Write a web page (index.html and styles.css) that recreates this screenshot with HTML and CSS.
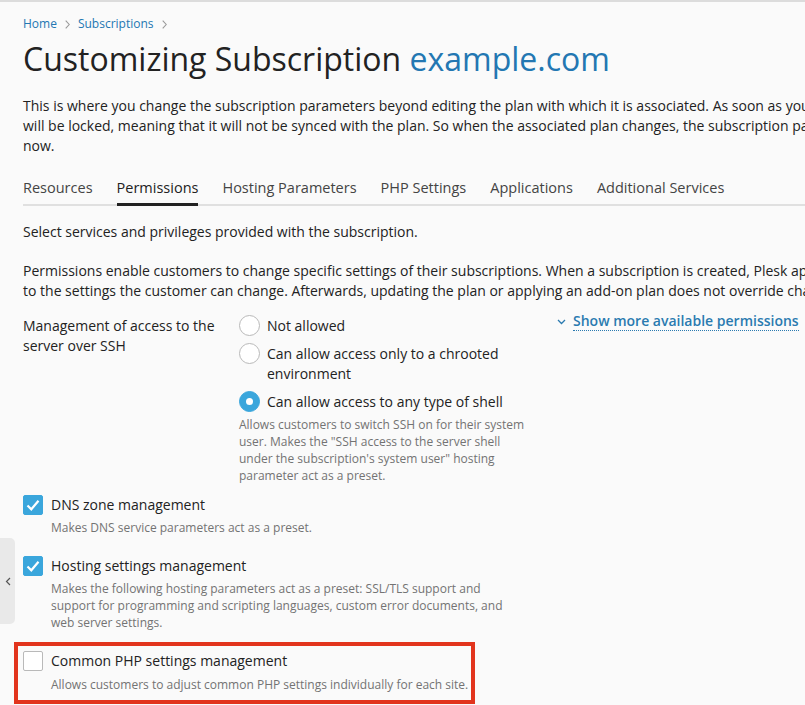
FILE: index.html
```html
<!DOCTYPE html>
<html lang="en">
<head>
<meta charset="utf-8">
<title>Customizing Subscription example.com</title>
<link rel="stylesheet" href="styles.css">
</head>
<body>
<div class="page">
  <nav class="breadcrumbs">
    <a href="#">Home</a><svg class="sep" width="5" height="9" viewBox="0 0 5 9"><path d="M0.7 0.7L4.2 4.5 0.7 8.3" fill="none" stroke="#999" stroke-width="1.1"/></svg><a href="#">Subscriptions</a><svg class="sep" width="5" height="9" viewBox="0 0 5 9"><path d="M0.7 0.7L4.2 4.5 0.7 8.3" fill="none" stroke="#999" stroke-width="1.1"/></svg>
  </nav>
  <h1 class="title">Customizing Subscription <span class="domain">example.com</span></h1>
  <p class="intro">This is where you change the subscription parameters beyond editing the plan with which it is associated. As soon as you save the changes, the subscription<br>will be locked, meaning that it will not be synced with the plan. So when the associated plan changes, the subscription parameters will stay as they are<br>now.</p>

  <ul class="tabs">
    <li class="tab">Resources</li>
    <li class="tab active">Permissions</li>
    <li class="tab">Hosting Parameters</li>
    <li class="tab">PHP Settings</li>
    <li class="tab">Applications</li>
    <li class="tab">Additional Services</li>
  </ul>

  <p class="hint">Select services and privileges provided with the subscription.</p>
  <p class="hint para">Permissions enable customers to change specific settings of their subscriptions. When a subscription is created, Plesk applies the plan's permissions<br>to the settings the customer can change. Afterwards, updating the plan or applying an add-on plan does not override changes made by the customer.</p>

  <div class="form-row">
    <div class="row-label">Management of access to the server over SSH</div>
    <div class="row-field">
      <label class="radio"><span class="radio-box"></span><span class="radio-text">Not allowed</span></label>
      <label class="radio"><span class="radio-box"></span><span class="radio-text">Can allow access only to a chrooted environment</span></label>
      <label class="radio"><span class="radio-box checked"></span><span class="radio-text">Can allow access to any type of shell</span></label>
      <div class="desc field-desc">Allows customers to switch SSH on for their system user. Makes the "SSH access to the server shell under the subscription's system user" hosting parameter act as a preset.</div>
    </div>
    <a class="more" href="#"><svg class="chev" width="9" height="6" viewBox="0 0 9 6"><path d="M1 1l3.5 3.5L8 1" fill="none" stroke="#2a7ab0" stroke-width="1.3"/></svg><span class="more-text">Show more available permissions</span></a>
  </div>

  <div class="check-item">
    <span class="checkbox checked"><svg width="14" height="12" viewBox="0 0 14 12"><path d="M1.5 6.5l3.8 3.8L12.5 1.8" fill="none" stroke="#fff" stroke-width="2.2"/></svg></span>
    <div class="check-body">
      <div class="check-label">DNS zone management</div>
      <div class="desc">Makes DNS service parameters act as a preset.</div>
    </div>
  </div>

  <div class="check-item">
    <span class="checkbox checked"><svg width="14" height="12" viewBox="0 0 14 12"><path d="M1.5 6.5l3.8 3.8L12.5 1.8" fill="none" stroke="#fff" stroke-width="2.2"/></svg></span>
    <div class="check-body">
      <div class="check-label">Hosting settings management</div>
      <div class="desc wrap">Makes the following hosting parameters act as a preset: SSL/TLS support and support for programming and scripting languages, custom error documents, and web server settings.</div>
    </div>
  </div>

  <div class="check-item highlight">
    <span class="checkbox"></span>
    <div class="check-body">
      <div class="check-label">Common PHP settings management</div>
      <div class="desc">Allows customers to adjust common PHP settings individually for each site.</div>
    </div>
  </div>
</div>
<div class="side-handle"><svg width="6" height="9" viewBox="0 0 6 9"><path d="M5 1L1.5 4.5 5 8" fill="none" stroke="#555" stroke-width="1.2"/></svg></div>
</body>
</html>
```
FILE: styles.css
```css
html, body {
  margin: 0;
  padding: 0;
  overflow: hidden;
  height: 100%;
}
body {
  background: #fafafa;
  font-family: "Open Sans", "Noto Sans", sans-serif;
  color: #222;
  border-top: 2px solid #dcdcdc;
  box-sizing: border-box;
  position: relative;
}
.page {
  width: 1100px;
  padding: 14px 0 0 23px;
}
a { color: #2377b2; text-decoration: none; }
.breadcrumbs {
  font-size: 12px;
  line-height: 16px;
  display: flex;
  align-items: center;
}
.breadcrumbs .sep {
  margin: 1px 8px 0;
}
.title {
  font-size: 32px;
  font-weight: 400;
  line-height: 44px;
  margin: 5px 0 0;
}
.domain { color: #2377b2; }
.intro {
  font-size: 14px;
  line-height: 20px;
  margin: 15px 0 0;
}
.tabs {
  list-style: none;
  margin: 22px 0 0;
  padding: 0;
  display: flex;
  gap: 24px;
  border-bottom: 2px solid #e0e0e0;
  width: 782px;
}
.tab {
  font-size: 14.5px;
  line-height: 20px;
  padding-bottom: 5px;
  color: #444;
  margin-bottom: -2px;
  border-bottom: 3px solid transparent;
}
.tab.active {
  color: #222;
  border-bottom-color: #222;
}
.hint {
  font-size: 14px;
  line-height: 20px;
  margin: 16px 0 0;
}
.hint.para { margin-top: 19px; }
.form-row {
  display: grid;
  grid-template-columns: 193px 298px auto;
  column-gap: 23px;
  margin-top: 10px;
  align-items: start;
}
.row-label {
  font-size: 14px;
  line-height: 20px;
  padding-top: 5px;
}
.row-field {
  display: flex;
  flex-direction: column;
  gap: 8px;
  padding-top: 5px;
}
.radio {
  display: flex;
  align-items: flex-start;
  gap: 7px;
  font-size: 14px;
  line-height: 20px;
}
.radio-box {
  flex: none;
  width: 21px;
  height: 21px;
  border: 1px solid #b9b9b9;
  border-radius: 50%;
  background: #fff;
  box-sizing: border-box;
  position: relative;
  margin-top: -1px;
}
.radio-box.checked {
  background: #3aa6dc;
  border-color: #3aa6dc;
}
.radio-box.checked::after {
  content: "";
  position: absolute;
  left: 6px;
  top: 6px;
  width: 7px;
  height: 7px;
  background: #fff;
  border-radius: 50%;
}
.desc {
  font-size: 12px;
  line-height: 17px;
  color: #737373;
}
.field-desc {
  margin-top: -4px;
  width: 290px;
}
.more {
  display: flex;
  align-items: center;
  gap: 7px;
  font-size: 14px;
  font-weight: 600;
  line-height: 20px;
  margin-top: 1px;
  margin-left: -3px;
  color: #2a7ab0;
}
.more-text {
  border-bottom: 1px dotted #2a7ab0;
  line-height: 18px;
}
.chev { margin-top: 1px; }
.check-item {
  display: flex;
  gap: 8px;
  margin-top: 11px;
  width: 443px;
}
.check-item + .check-item { margin-top: 20px; }
.check-item.highlight {
  margin-top: 20px;
  padding-bottom: 2px;
  outline: 4px solid #e2341d;
  outline-offset: 5px;
}
.highlight .desc { white-space: nowrap; }
.highlight .check-body { gap: 5px; }
.checkbox {
  flex: none;
  width: 20px;
  height: 20px;
  box-sizing: border-box;
  border: 1px solid #b9b9b9;
  border-radius: 2px;
  background: #fff;
  display: flex;
  align-items: center;
  justify-content: center;
}
.checkbox.checked {
  background: #3aa6dc;
  border-color: #3aa6dc;
}
.check-body {
  display: flex;
  flex-direction: column;
  gap: 4px;
}
.check-label {
  font-size: 14px;
  line-height: 20px;
}
.desc.wrap { width: 460px; }
.side-handle {
  position: absolute;
  left: 0;
  top: 536px;
  width: 15px;
  height: 86px;
  background: #e9e9e9;
  border-radius: 0 5px 5px 0;
  display: flex;
  align-items: center;
  justify-content: center;
}
```
